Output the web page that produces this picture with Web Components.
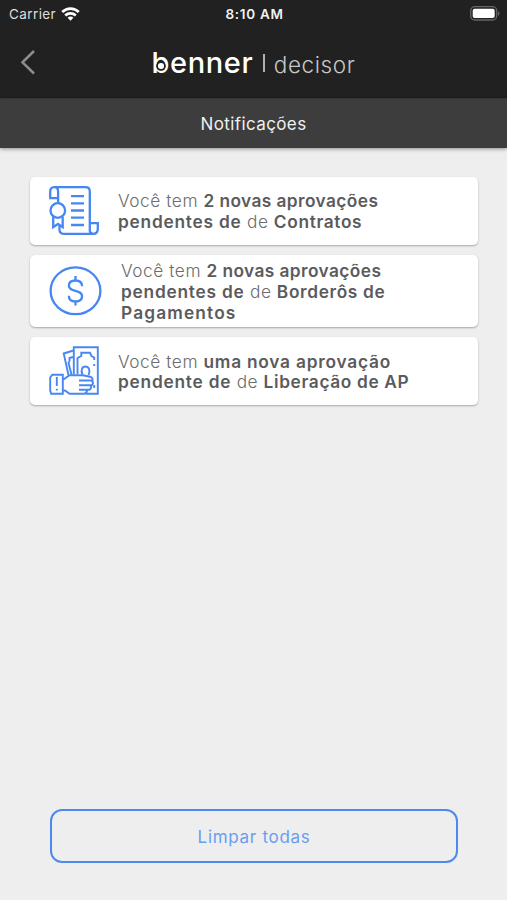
<!DOCTYPE html>
<html lang="pt-BR">
<head>
<meta charset="utf-8">
<title>Benner Decisor</title>
<style>
  body {
    margin: 0;
    background: #eeeeee;
    font-family: Inter, "Open Sans", sans-serif;
  }
</style>
</head>
<body>
<decisor-app></decisor-app>

<script>
class StatusBar extends HTMLElement {
  connectedCallback() {
    this.attachShadow({ mode: 'open' });
    this.shadowRoot.innerHTML = `
      <style>
        :host {
          display: grid;
          grid-template-columns: 1fr auto 1fr;
          align-items: center;
          height: 28px;
          padding: 0 7px 0 9px;
          box-sizing: border-box;
          color: #f2f2f2;
          font-size: 13.5px;
        }

        .carrier {
          display: flex;
          align-items: center;
          gap: 5px;
          color: #dedede;
          letter-spacing: 0.4px;
        }

        .carrier svg {
          margin-bottom: 1px;
        }

        .time {
          font-weight: 600;
          font-size: 13.5px;
          letter-spacing: 0.7px;
        }

        .battery {
          justify-self: end;
          margin-bottom: 1px;
        }

        svg {
          display: block;
        }
      </style>
      <div class="carrier">
        <span>Carrier</span>
        <svg width="19" height="14" viewBox="0 0 19 14" fill="none" stroke="#fff" stroke-width="2.7">
          <path d="M1.2 5C6 .4 13 .4 17.8 5"/>
          <path d="M4.2 8.4c3-2.8 7.6-2.8 10.6 0"/>
          <path d="M9.5 13.7L6.600 10.700c1.600-1.500 4.200-1.500 5.800 0z" fill="#fff" stroke="none"/>
        </svg>
      </div>
      <span class="time">8:10 AM</span>
      <svg class="battery" width="30" height="15" viewBox="0 0 30 15">
        <rect x=".7" y=".7" width="26" height="13.3" rx="4" fill="#222" stroke="#666" stroke-width="1.3"/>
        <rect x="2.700" y="2.700" width="22" height="9.3" rx="2" fill="#fff"/>
        <path d="M28 5.2c2 .8 2 3.7 0 4.5z" fill="#666"/>
      </svg>
    `;
  }
}

class AppHeader extends HTMLElement {
  connectedCallback() {
    this.attachShadow({ mode: 'open' });
    this.shadowRoot.innerHTML = `
      <style>
        :host {
          display: block;
          background: #212121;
        }

        .bar {
          display: grid;
          grid-template-columns: 1fr auto 1fr;
          align-items: center;
          height: 70px;
          padding: 0 20px;
        }

        .back {
          width: 16px;
          height: 26px;
          margin-bottom: 2px;
        }

        .brand {
          display: flex;
          align-items: baseline;
          color: #c8c8c8;
          white-space: nowrap;
        }

        .logo {
          position: relative;
          color: #ffffff;
          font-size: 29px;
          font-weight: 550;
          line-height: 34px;
          letter-spacing: 0.6px;
        }

        /* pupil inside the bowl of the b, with a dark gap around it */
        .logo::after {
          content: '';
          position: absolute;
          left: 6.8px;
          top: 17px;
          width: 5.5px;
          height: 5.5px;
          border-radius: 50%;
          background: #ffffff;
          box-shadow: 0 0 0 1.8px #212121;
        }

        .divider {
          width: 1.5px;
          height: 18px;
          margin: 0 9px 0 10px;
          align-self: center;
          background: #b0b0b0;
        }

        .product {
          font-size: 22.5px;
          font-weight: 350;
          letter-spacing: 0.6px;
        }
      </style>
      <status-bar></status-bar>
      <div class="bar">
        <svg class="back" viewBox="0 0 16 26" fill="none" stroke="#8e8e8e" stroke-width="2.5">
          <path d="M14 2L2.500 13.300 14 24.500"/>
        </svg>
        <div class="brand">
          <span class="logo">benner</span>
          <span class="divider"></span>
          <span class="product">decisor</span>
        </div>
      </div>
    `;
  }
}

class PageTitle extends HTMLElement {
  connectedCallback() {
    this.attachShadow({ mode: 'open' });
    this.shadowRoot.innerHTML = `
      <style>
        :host {
          display: flex;
          align-items: center;
          justify-content: center;
          height: 50px;
          padding-top: 1px;
          background: #3d3d3d;
          box-shadow: 0 1px 4px rgba(0, 0, 0, 0.4);
          border-top: 1px solid #343434;
          box-sizing: border-box;
          color: #f0f0f0;
          font-size: 17px;
          letter-spacing: 0.4px;
        }
      </style>
      <slot></slot>
    `;
  }
}

const icons = {
  contract: `
    <svg width="50" height="50" viewBox="-.5 -.5 50 50">
      <path d="M8.600 11.700H.7V5.200Q.7.700 4.700.7H36Q40.300.7 40.300 5V44Q40.300 47.300 44 47.300T48.300 43V36.700H40.300M4.700.7Q8.600.7 8.600 5V16.500M10 39V43Q10 47.300 14 47.300H44"/>
      <circle cx="8.300" cy="24" r="7.300"/>
      <path d="M3.700 30.500V40.700L8.500 37.500 13.200 40.700V30.500"/>
      <path d="M21.500 9.700h13M21.500 16.800h13M21.500 24h13M21.500 31.200h13M21.500 38.500h13"/>
    </svg>`,
  money: `
    <svg width="53" height="50" viewBox="-.5 -.5 53 50">
      <ellipse cx="26" cy="24.300" rx="24.900" ry="23.400"/>
      <path d="M26 9.500V14M26 34.500V39M32.600 19.800C32.600 16 30 14 26 14S19.400 16 19.400 19.300C19.400 26 32.600 22.800 32.600 29.600C32.600 33 30 35 26 35S19.400 33 19.400 29.200"/>
    </svg>`,
  payment: `
    <svg width="50" height="50" viewBox="-.5 -.5 50 50" style="stroke-width: 1.9">
      <path d="M24.300 28V.7H48.300V47.300H36"/>
      <path d="M24 4L14.200 7 19 28.500M23.500 10.500L20 11.500Q20.500 15 19 16.500L22 28"/>
      <path d="M28 27.500V11.500L31.800 9.500V6.300H40.500L42 9.500 44.700 11V13.500M44.700 17.500V19.500M44.700 38.500V41.500"/>
      <path d="M33 28C30.800 23.500 32.800 20 36 20S41.200 23.500 39 28.500"/>
      <path d="M13.300 28.200H2.700L.7 31V44L1.700 47.300H13.300ZM13.300 44H15.500L20 47.300H34.500Q37.500 47 37.500 43.500M14 33L20 28.700H33.500L41.500 30.500Q43.500 31.500 43 34H29.500M42.500 34.200Q44.500 36.500 42.500 38.700H29.500M41.500 39Q42 43.200 39 43.200H29.500M7.300 30.500V39.500M7.300 42.300V44"/>
    </svg>`
};

class NotificationCard extends HTMLElement {
  connectedCallback() {
    this.attachShadow({ mode: 'open' });
    this.shadowRoot.innerHTML = `
      <style>
        :host {
          display: flex;
          align-items: center;
          gap: 19px;
          box-sizing: border-box;
          min-height: 68px;
          padding: 6px 19px 4px;
          background: #ffffff;
          border-radius: 5px;
          box-shadow: 0 1px 2px rgba(0, 0, 0, 0.3);
          color: #6c6c6c;
          font-size: 17.3px;
          font-weight: 300;
          line-height: 20.8px;
          letter-spacing: 0.55px;
          white-space: nowrap;
        }

        svg {
          display: block;
          flex: none;
          margin-top: -2px;
          fill: none;
          stroke: #4787f1;
          stroke-width: 2.3;
        }

        ::slotted(b) {
          font-weight: 600;
          color: #5b5b5d;
          letter-spacing: var(--track, 0.65px);
        }
      </style>
      ${icons[this.getAttribute('icon')]}
      <div class="text"><slot></slot></div>
    `;
  }
}

class OutlineButton extends HTMLElement {
  connectedCallback() {
    this.attachShadow({ mode: 'open' });
    this.shadowRoot.innerHTML = `
      <style>
        :host {
          display: block;
        }

        button {
          display: block;
          width: 100%;
          height: 54px;
          padding-top: 2px;
          border: 2.5px solid #5089ee;
          border-radius: 12px;
          background: none;
          color: #6a9df1;
          font: inherit;
          font-size: 17px;
          letter-spacing: 0.7px;
        }
      </style>
      <button><slot></slot></button>
    `;
  }
}

class DecisorApp extends HTMLElement {
  connectedCallback() {
    this.attachShadow({ mode: 'open' });
    this.shadowRoot.innerHTML = `
      <style>
        :host {
          display: flex;
          flex-direction: column;
          height: 100vh;
          overflow: hidden;
        }

        .list {
          flex: 1;
          display: flex;
          flex-direction: column;
          gap: 10px;
          padding: 29px 29px 0 30px;
        }

        .footer {
          padding: 0 49px 37px 50px;
        }

        .tight {
          --track: 0.42px;
        }

        .loose {
          --track: 0.78px;
        }

        .looser {
          --track: 1.15px;
        }
      </style>
      <app-header></app-header>
      <page-title>Notificações</page-title>
      <div class="list">
        <notification-card icon="contract">Você tem <b class="tight">2 novas aprovações</b><br><b class="loose">pendentes de</b> de <b>Contratos</b></notification-card>
        <notification-card icon="money">Você tem <b class="tight">2 novas aprovações</b><br><b class="loose">pendentes de</b> de <b>Borderôs de</b><br><b class="looser">Pagamentos</b></notification-card>
        <notification-card icon="payment">Você tem <b class="loose">uma nova aprovação</b><br><b class="loose">pendente de</b> de <b>Liberação de AP</b></notification-card>
      </div>
      <div class="footer">
        <outline-button>Limpar todas</outline-button>
      </div>
    `;
  }
}

customElements.define('status-bar', StatusBar);
customElements.define('app-header', AppHeader);
customElements.define('page-title', PageTitle);
customElements.define('notification-card', NotificationCard);
customElements.define('outline-button', OutlineButton);
customElements.define('decisor-app', DecisorApp);
</script>
</body>
</html>
